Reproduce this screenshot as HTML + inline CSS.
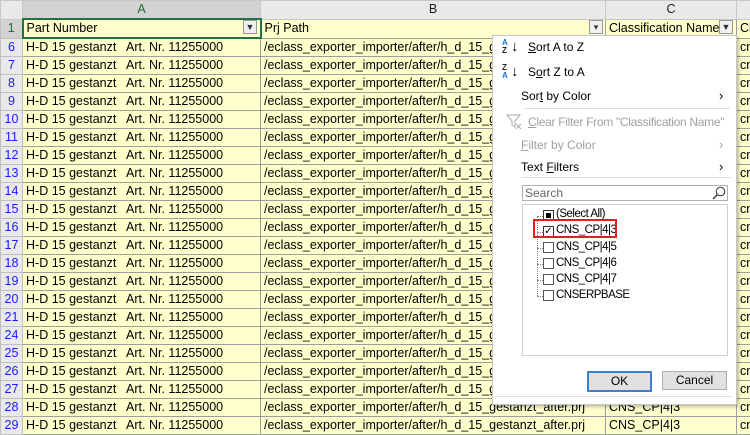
<!DOCTYPE html>
<html><head><meta charset="utf-8"><style>
body{margin:0;width:750px;height:429px;overflow:hidden;background:#fff;font-family:"Liberation Sans",sans-serif;position:relative}
table{border-collapse:collapse;table-layout:fixed;position:absolute;left:0;top:0;font-size:12.5px;width:766px}
td{height:17px;padding:0 0 0 3px;border:1px solid #9e9e9e;background:#ffffcc;white-space:nowrap;overflow:hidden;color:#000;line-height:17px}
td.n{background:#e9e9e9;color:#1a1aff;text-align:center;padding:0;border-color:#c0c0c0;font-size:12.5px}
tr.h td{background:#e9e9e9;text-align:center;color:#222;border-color:#c8c8c8;padding:0}
tr.h td.sel{background:#d2d2d2;color:#1e6e38;border-bottom:2px solid #217346}
.fb{position:absolute;width:14px;height:14px;border:1px solid #999;background:#f0f0f0;box-sizing:border-box;font-size:9px;line-height:12px;text-align:center;color:#333}
.m{position:absolute;left:492px;top:35px;width:243px;height:368px;background:#fff;border:1px solid #c6c6c6;box-shadow:2px 2px 3px rgba(0,0,0,.25);font-size:12px;color:#000}
.m .i{position:absolute;white-space:nowrap}
.g{color:#a0a0a0}
.arr{position:absolute;left:226px;font-size:13px}
.cb{position:absolute;left:50px;width:9px;height:9px;border:1px solid #333;background:#fff}
.lt{position:absolute;left:63px;white-space:nowrap;letter-spacing:-0.5px;font-size:11.5px}
.btn{position:absolute;top:335px;height:17px;border:1px solid #adadad;background:#e1e1e1;text-align:center;line-height:17px;font-size:12px}
</style></head><body>
<table>
<colgroup><col style="width:22px"><col style="width:238px"><col style="width:345px"><col style="width:131px"><col style="width:30px"></colgroup>
<tr class="h"><td></td><td class="sel">A</td><td>B</td><td>C</td><td></td></tr>
<tr><td class="n" style="color:#1e6e38;background:#d2d2d2">1</td><td style="border:2px solid #217346">Part Number</td><td>Prj Path</td><td>Classification Name</td><td>Cla</td></tr>
<tr><td class="n">6</td><td>H-D 15 gestanzt&nbsp;&nbsp; Art. Nr. 11255000</td><td>/eclass_exporter_importer/after/h_d_15_gestanzt_after.prj</td><td>CNS_CP|4|3</td><td>cn</td></tr>
<tr><td class="n">7</td><td>H-D 15 gestanzt&nbsp;&nbsp; Art. Nr. 11255000</td><td>/eclass_exporter_importer/after/h_d_15_gestanzt_after.prj</td><td>CNS_CP|4|3</td><td>cn</td></tr>
<tr><td class="n">8</td><td>H-D 15 gestanzt&nbsp;&nbsp; Art. Nr. 11255000</td><td>/eclass_exporter_importer/after/h_d_15_gestanzt_after.prj</td><td>CNS_CP|4|3</td><td>cn</td></tr>
<tr><td class="n">9</td><td>H-D 15 gestanzt&nbsp;&nbsp; Art. Nr. 11255000</td><td>/eclass_exporter_importer/after/h_d_15_gestanzt_after.prj</td><td>CNS_CP|4|3</td><td>cn</td></tr>
<tr><td class="n">10</td><td>H-D 15 gestanzt&nbsp;&nbsp; Art. Nr. 11255000</td><td>/eclass_exporter_importer/after/h_d_15_gestanzt_after.prj</td><td>CNS_CP|4|3</td><td>cn</td></tr>
<tr><td class="n">11</td><td>H-D 15 gestanzt&nbsp;&nbsp; Art. Nr. 11255000</td><td>/eclass_exporter_importer/after/h_d_15_gestanzt_after.prj</td><td>CNS_CP|4|3</td><td>cn</td></tr>
<tr><td class="n">12</td><td>H-D 15 gestanzt&nbsp;&nbsp; Art. Nr. 11255000</td><td>/eclass_exporter_importer/after/h_d_15_gestanzt_after.prj</td><td>CNS_CP|4|3</td><td>cn</td></tr>
<tr><td class="n">13</td><td>H-D 15 gestanzt&nbsp;&nbsp; Art. Nr. 11255000</td><td>/eclass_exporter_importer/after/h_d_15_gestanzt_after.prj</td><td>CNS_CP|4|3</td><td>cn</td></tr>
<tr><td class="n">14</td><td>H-D 15 gestanzt&nbsp;&nbsp; Art. Nr. 11255000</td><td>/eclass_exporter_importer/after/h_d_15_gestanzt_after.prj</td><td>CNS_CP|4|3</td><td>cn</td></tr>
<tr><td class="n">15</td><td>H-D 15 gestanzt&nbsp;&nbsp; Art. Nr. 11255000</td><td>/eclass_exporter_importer/after/h_d_15_gestanzt_after.prj</td><td>CNS_CP|4|3</td><td>cn</td></tr>
<tr><td class="n">16</td><td>H-D 15 gestanzt&nbsp;&nbsp; Art. Nr. 11255000</td><td>/eclass_exporter_importer/after/h_d_15_gestanzt_after.prj</td><td>CNS_CP|4|3</td><td>cn</td></tr>
<tr><td class="n">17</td><td>H-D 15 gestanzt&nbsp;&nbsp; Art. Nr. 11255000</td><td>/eclass_exporter_importer/after/h_d_15_gestanzt_after.prj</td><td>CNS_CP|4|3</td><td>cn</td></tr>
<tr><td class="n">18</td><td>H-D 15 gestanzt&nbsp;&nbsp; Art. Nr. 11255000</td><td>/eclass_exporter_importer/after/h_d_15_gestanzt_after.prj</td><td>CNS_CP|4|3</td><td>cn</td></tr>
<tr><td class="n">19</td><td>H-D 15 gestanzt&nbsp;&nbsp; Art. Nr. 11255000</td><td>/eclass_exporter_importer/after/h_d_15_gestanzt_after.prj</td><td>CNS_CP|4|3</td><td>cn</td></tr>
<tr><td class="n">20</td><td>H-D 15 gestanzt&nbsp;&nbsp; Art. Nr. 11255000</td><td>/eclass_exporter_importer/after/h_d_15_gestanzt_after.prj</td><td>CNS_CP|4|3</td><td>cn</td></tr>
<tr><td class="n">21</td><td>H-D 15 gestanzt&nbsp;&nbsp; Art. Nr. 11255000</td><td>/eclass_exporter_importer/after/h_d_15_gestanzt_after.prj</td><td>CNS_CP|4|3</td><td>cn</td></tr>
<tr><td class="n">24</td><td>H-D 15 gestanzt&nbsp;&nbsp; Art. Nr. 11255000</td><td>/eclass_exporter_importer/after/h_d_15_gestanzt_after.prj</td><td>CNS_CP|4|3</td><td>cn</td></tr>
<tr><td class="n">25</td><td>H-D 15 gestanzt&nbsp;&nbsp; Art. Nr. 11255000</td><td>/eclass_exporter_importer/after/h_d_15_gestanzt_after.prj</td><td>CNS_CP|4|3</td><td>cn</td></tr>
<tr><td class="n">26</td><td>H-D 15 gestanzt&nbsp;&nbsp; Art. Nr. 11255000</td><td>/eclass_exporter_importer/after/h_d_15_gestanzt_after.prj</td><td>CNS_CP|4|3</td><td>cn</td></tr>
<tr><td class="n">27</td><td>H-D 15 gestanzt&nbsp;&nbsp; Art. Nr. 11255000</td><td>/eclass_exporter_importer/after/h_d_15_gestanzt_after.prj</td><td>CNS_CP|4|3</td><td>cn</td></tr>
<tr><td class="n">28</td><td>H-D 15 gestanzt&nbsp;&nbsp; Art. Nr. 11255000</td><td>/eclass_exporter_importer/after/h_d_15_gestanzt_after.prj</td><td>CNS_CP|4|3</td><td>cn</td></tr>
<tr><td class="n">29</td><td>H-D 15 gestanzt&nbsp;&nbsp; Art. Nr. 11255000</td><td>/eclass_exporter_importer/after/h_d_15_gestanzt_after.prj</td><td>CNS_CP|4|3</td><td>cn</td></tr>
</table>
<div class="fb" style="left:243px;top:20px">&#9660;</div>
<div class="fb" style="left:589px;top:20px">&#9662;</div>
<div class="fb" style="left:719px;top:20px">&#9660;</div>

<div class="m">
 <div class="i" style="left:9px;top:3px;font-size:8px;line-height:8px;color:#1f74c8;font-weight:bold">A<br><span style="color:#222">Z</span></div>
 <div class="i" style="left:18px;top:2px;font-size:15px">&#8595;</div>
 <div class="i" style="left:35px;top:4px"><u>S</u>ort A to Z</div>
 <div class="i" style="left:9px;top:28px;font-size:8px;line-height:8px;color:#222;font-weight:bold">Z<br><span style="color:#1f74c8">A</span></div>
 <div class="i" style="left:18px;top:27px;font-size:15px">&#8595;</div>
 <div class="i" style="left:35px;top:29px">S<u>o</u>rt Z to A</div>
 <div class="i" style="left:28px;top:53px">Sor<u>t</u> by Color</div>
 <div class="arr" style="top:52px">&#8250;</div>
 <div class="i" style="left:32px;top:72px;width:205px;border-top:1px solid #ddd"></div>
 <svg class="i" style="left:13px;top:78px" width="16" height="16"><path d="M1 1h13l-5 6v6l-3-2V7z" fill="none" stroke="#aaa"/><path d="M10 10l5 5M15 10l-5 5" stroke="#aaa"/></svg>
 <div class="i g" style="left:35px;top:79px;letter-spacing:-0.3px"><u>C</u>lear Filter From "Classification Name"</div>
 <div class="i g" style="left:28px;top:102px"><u>F</u>ilter by Color</div>
 <div class="arr g" style="top:101px">&#8250;</div>
 <div class="i" style="left:28px;top:124px">Text <u>F</u>ilters</div>
 <div class="arr" style="top:123px">&#8250;</div>
 <div class="i" style="left:28px;top:141px;width:210px;border-top:1px solid #ddd"></div>
 <div class="i" style="left:29px;top:149px;height:16px;border:1px solid #b0b0b0;color:#666;line-height:15px;padding-left:2px;box-sizing:border-box;width:206px">Search</div>
 <svg class="i" style="left:219px;top:150px" width="14" height="14"><circle cx="8.5" cy="5.5" r="4.3" fill="none" stroke="#333"/><path d="M5.5 8.5L1 13" stroke="#333" stroke-width="1.3"/></svg>
 <div class="i" style="left:29px;top:168px;width:206px;height:152px;border:1px solid #d0d0d0;box-sizing:border-box"></div>
 <div class="i" style="left:44px;top:180px;height:80px;border-left:1px dotted #888"></div>
 <div class="i" style="left:44px;top:180px;width:6px;border-top:1px dotted #888"></div>
 <div class="i" style="left:44px;top:196px;width:6px;border-top:1px dotted #888"></div>
 <div class="i" style="left:44px;top:212px;width:6px;border-top:1px dotted #888"></div>
 <div class="i" style="left:44px;top:228px;width:6px;border-top:1px dotted #888"></div>
 <div class="i" style="left:44px;top:244px;width:6px;border-top:1px dotted #888"></div>
 <div class="i" style="left:44px;top:260px;width:6px;border-top:1px dotted #888"></div>
 <div class="cb" style="top:174px"><div style="margin:2px;width:5px;height:5px;background:#000"></div></div>
 <div class="lt" style="top:172px">(Select All)</div>
 <div class="cb" style="top:190px;font-size:10px;line-height:9px;text-align:center">&#10003;</div>
 <div class="lt" style="top:188px">CNS_CP|4|3</div>
 <div class="i" style="left:40px;top:183px;width:84px;height:19px;border:2px solid #e02020;box-sizing:border-box"></div>
 <div class="cb" style="top:206px;border-color:#555"></div><div class="lt" style="top:205px">CNS_CP|4|5</div>
 <div class="cb" style="top:222px;border-color:#555"></div><div class="lt" style="top:221px">CNS_CP|4|6</div>
 <div class="cb" style="top:238px;border-color:#555"></div><div class="lt" style="top:237px">CNS_CP|4|7</div>
 <div class="cb" style="top:254px;border-color:#555"></div><div class="lt" style="top:253px">CNSERPBASE</div>
 <div class="btn" style="left:94px;width:61px;border:2px solid #3c7fd1">OK</div>
 <div class="btn" style="left:169px;width:63px">Cancel</div>
 <div class="i" style="left:3px;top:360px;width:236px;border-top:1px solid #e0e0e0"></div>
</div>
</body></html>
